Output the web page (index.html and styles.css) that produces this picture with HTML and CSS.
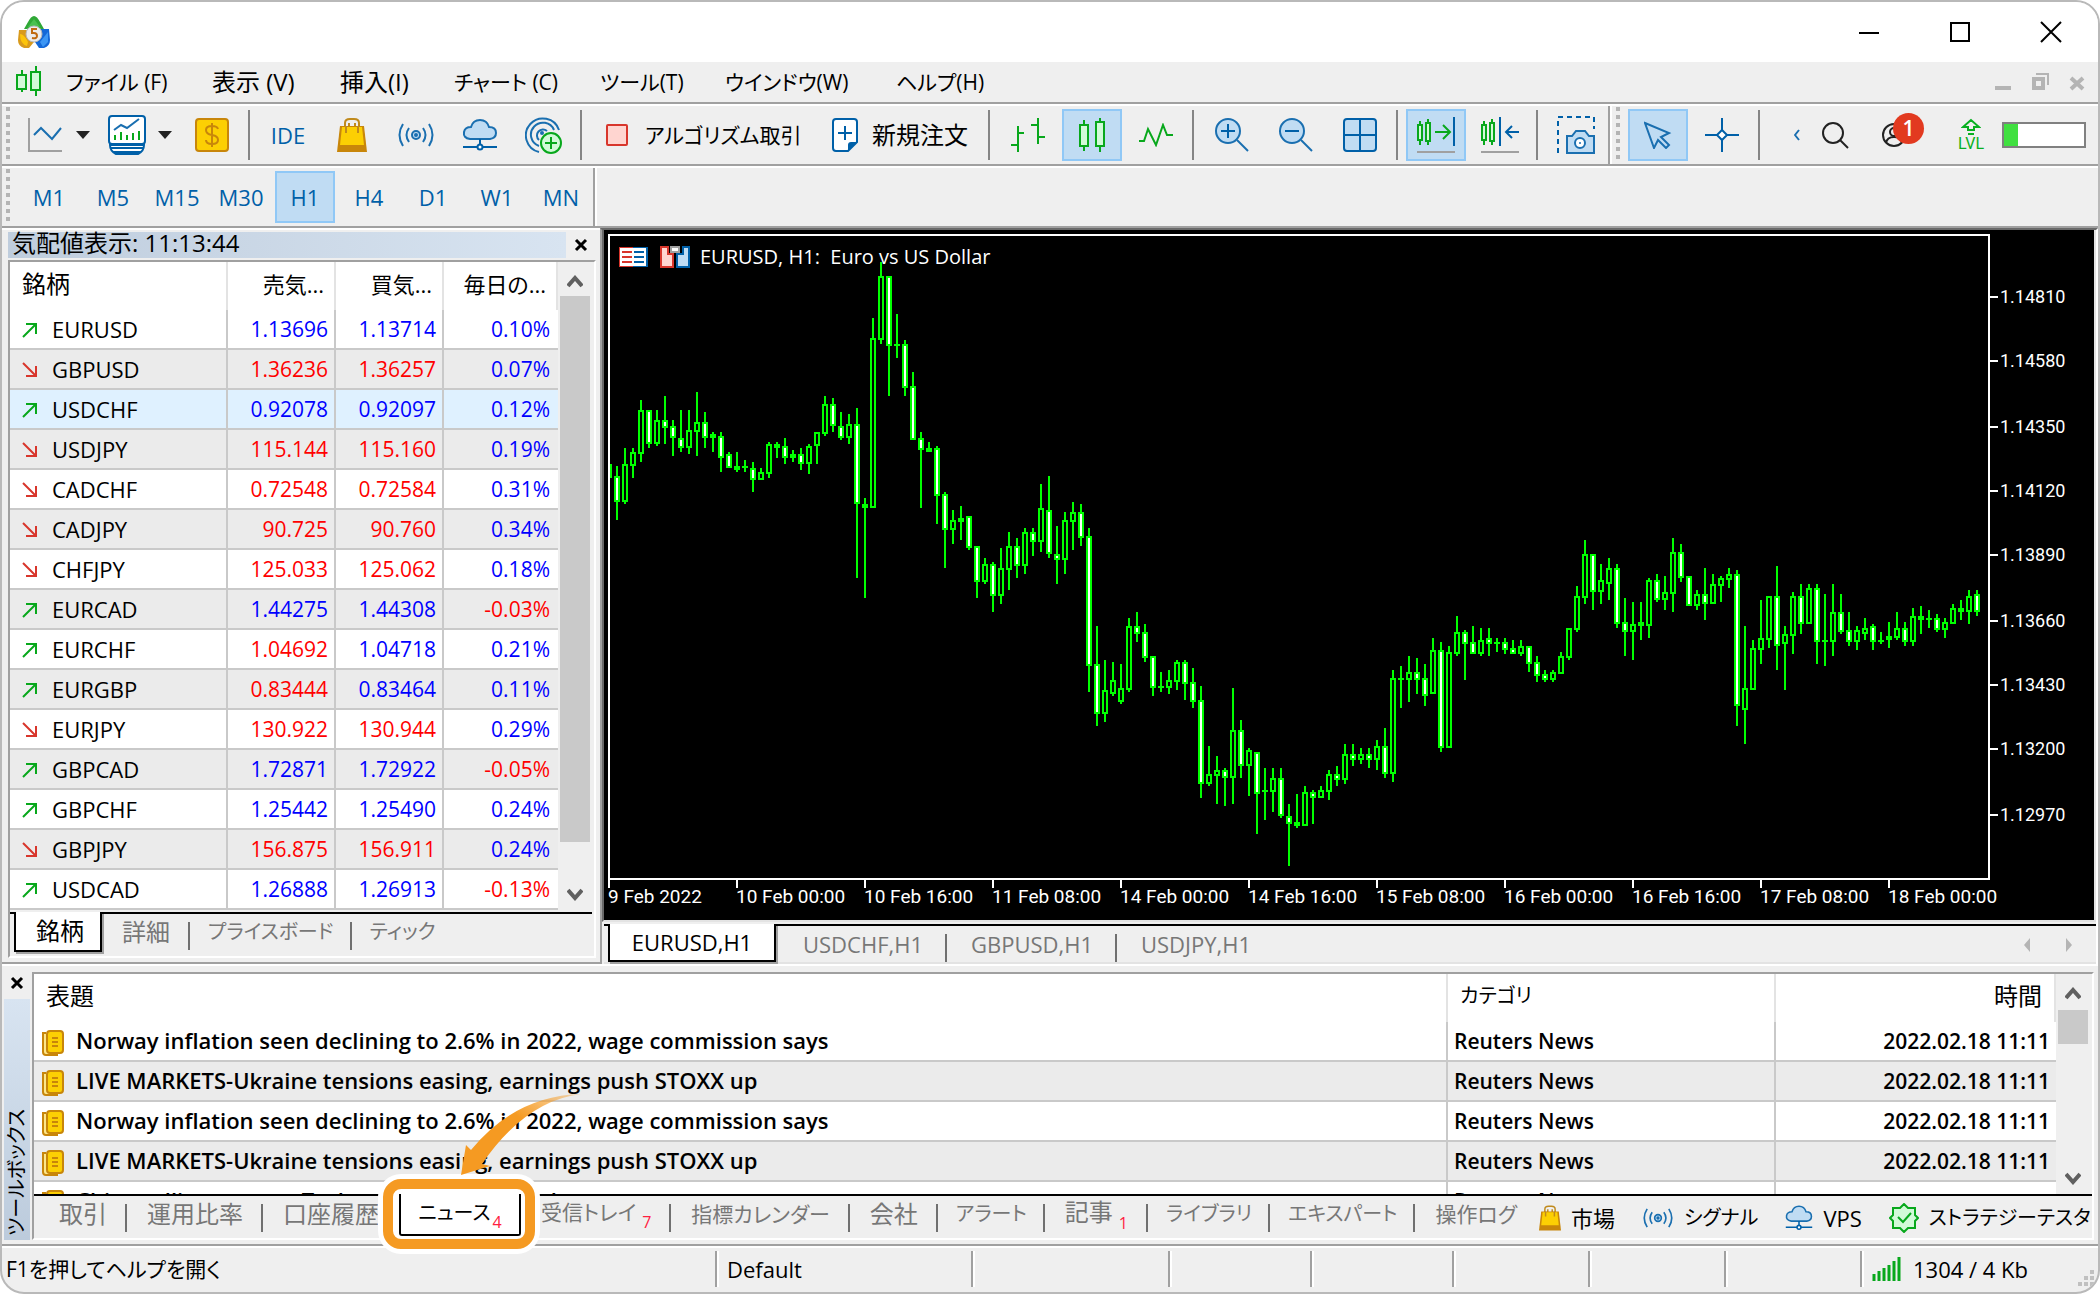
FILE: index.html
```html
<!DOCTYPE html>
<html lang="ja">
<head>
<meta charset="utf-8">
<title>MetaTrader 5</title>
<link rel="stylesheet" href="styles.css">
</head>
<body>
<svg class="defs" width="0" height="0" aria-hidden="true">
  <defs>
    <symbol id="bag" viewBox="0 0 30 34"><path d="M8 9V5q0-4 5-4h4q5 0 5 4v4M12 9V5M18 9V5" fill="none" stroke="#c08a1c" stroke-width="2"/><path d="M3 8h24l3 26H0z" fill="#c8860a"/><path d="M5 9h20l2 18H3z" fill="#fccf03"/><path d="M9 8v7M21 8v7" stroke="#c08a1c" stroke-width="2"/></symbol>
    <symbol id="signal" viewBox="0 0 36 24"><g fill="none" stroke="#1a6fb0" stroke-width="2"><circle cx="18" cy="12" r="4" fill="#c0dcf3"/><circle cx="18" cy="12" r="1"/><path d="M11 5q-5 7 0 14M25 5q5 7 0 14M5 1q-7 11 0 22M31 1q7 11 0 22"/></g></symbol>
    <symbol id="cloud" viewBox="0 0 36 32"><path d="M8 20q-7-1-6-7 1-5 7-5 2-7 9-7t9 7q7 0 7 6 0 5-6 6z" fill="#c0dcf3" stroke="#1a6fb0" stroke-width="2"/><path d="M18 20v7M1 28h34" stroke="#0060a8" stroke-width="2"/><circle cx="18" cy="28" r="2.500" fill="#fff" stroke="#0060a8" stroke-width="2"/></symbol>
    <symbol id="up" viewBox="0 0 16 16"><path d="M1 15L14 2M4 2h10v10" fill="none" stroke="#08a81c" stroke-width="2"/></symbol>
    <symbol id="down" viewBox="0 0 16 16"><path d="M1 1l13 13M4 14h10V4" fill="none" stroke="#d8362c" stroke-width="2"/></symbol>
    <symbol id="news" viewBox="0 0 22 26"><path d="M4 3H1v19q0 3 3 3h11v-3" fill="#fde78a" stroke="#c8860a" stroke-width="2"/><rect x="5" y="1" width="16" height="22" rx="3" fill="#fccf03" stroke="#c8860a" stroke-width="2"/><path d="M10 8h6M10 12h6M10 16h6" stroke="#c8860a" stroke-width="2"/></symbol>
    <symbol id="chev-up" viewBox="0 0 16 14"><path d="M1 11l7-8 7 8" fill="none" stroke="#606060" stroke-width="4"/></symbol>
    <symbol id="chev-down" viewBox="0 0 16 14"><path d="M1 3l7 8 7-8" fill="none" stroke="#606060" stroke-width="4"/></symbol>
    <symbol id="close" viewBox="0 0 14 14"><path d="M2 2l10 10M12 2L2 12" stroke="#000" stroke-width="3"/></symbol>
  </defs>
</svg>

<div class="window">
  <header class="titlebar">
    <svg class="logo" width="32" height="32" viewBox="0 0 32 32"><path d="M16 0q3 0 6 6l4 7H6l4-7q3-6 6-6z" fill="#2fa836"/><path d="M1 14l9 0 6 12-5 6H6q-6-2-6-8z" fill="#d89a1c"/><path d="M2 18q4 0 8 8l-1 4q-7-2-7-12z" fill="#fcc40a"/><path d="M31 13l-8 0-6 13 4 6h5q6-2 6-8z" fill="#1468d8"/><path d="M22 26l8-10v10l-5 5z" fill="#3c96f4"/><path d="M16 3l6 8H10z" fill="#5cd060" opacity=".6"/><circle cx="16" cy="18" r="8" fill="#ececec" stroke="#b8b8b8"/><path d="M19 13h-5v4h2q3 0 3 3t-5 2" fill="none" stroke="#c06a10" stroke-width="2"/></svg>
    <div class="win-buttons">
      <button aria-label="最小化"><svg width="22" height="22" viewBox="0 0 22 22"><path d="M1 12h20" stroke="#000" stroke-width="2"/></svg></button>
      <button aria-label="最大化"><svg width="22" height="22" viewBox="0 0 22 22"><path d="M2 2h18v18H2z" fill="none" stroke="#000" stroke-width="2"/></svg></button>
      <button aria-label="閉じる"><svg width="22" height="22" viewBox="0 0 22 22"><path d="M1 1l20 20M21 1L1 21" stroke="#000" stroke-width="2"/></svg></button>
    </div>
  </header>

  <nav class="menubar">
    <svg width="26" height="32" viewBox="0 0 26 32"><g fill="#d2fad8" stroke="#08a81c" stroke-width="2"><path d="M6 4v22M20 0v30"/><path d="M1 9h9v14H1zM15 6h9v18h-9z"/></g></svg>
    <button class="m1">ファイル (F)</button><button class="m2">表示 (V)</button><button class="m3">挿入(I)</button><button class="m4">チャート (C)</button><button class="m5">ツール(T)</button><button class="m6">ウインドウ(W)</button><button class="m7">ヘルプ(H)</button>
    <div class="mdi-buttons">
      <button aria-label="チャートを最小化"><svg width="18" height="18" viewBox="0 0 18 18"><path d="M1 15h16" stroke="#b4b4b4" stroke-width="4"/></svg></button>
      <button aria-label="元に戻す"><svg width="18" height="18" viewBox="0 0 18 18"><path d="M5 1h12v11" fill="none" stroke="#b4b4b4" stroke-width="2"/><path d="M3 6h9v9H3z" fill="none" stroke="#b4b4b4" stroke-width="4"/></svg></button>
      <button aria-label="チャートを閉じる"><svg width="18" height="18" viewBox="0 0 18 18"><path d="M3 5l12 11M15 5L3 16" stroke="#b4b4b4" stroke-width="4"/></svg></button>
    </div>
  </nav>

  <div class="toolbar">
    <i class="grip"></i>
    <button class="tb split" aria-label="ライン"><svg width="36" height="36" viewBox="0 0 36 36"><path d="M2 1v33h33" fill="none" stroke="#a0a0a0" stroke-width="2"/><path d="M7 18l7-7 11 11L34 11" fill="none" stroke="#1a6fb0" stroke-width="2"/></svg></button>
    <button class="caret" aria-label="ラインの種類"><i></i></button>
    <button class="tb split" aria-label="指標"><svg width="38" height="40" viewBox="0 0 38 40"><rect x="1" y="1" width="36" height="28" rx="3" fill="#fff" stroke="#0060a8" stroke-width="2"/><path d="M6 15l7-5 6 3 12-9" fill="none" stroke="#1a6fb0" stroke-width="2"/><path d="M7 20v5M13 17v8M19 20v5M25 18v7M31 16v9" stroke="#08a81c" stroke-width="2"/><path d="M2 30q0 6 6 9h22q6-3 6-9z" fill="#fff" stroke="#0060a8" stroke-width="2"/><path d="M2 33h34M5 37h28" stroke="#0060a8" stroke-width="2"/></svg></button>
    <button class="caret" aria-label="指標一覧"><i></i></button>
    <button class="tb" aria-label="取引"><svg width="34" height="34" viewBox="0 0 34 34"><rect x="1" y="1" width="32" height="32" rx="3" fill="#fccf03" stroke="#c8860a" stroke-width="2"/><path d="M23 11q-1-3-6-3-6 0-6 4t6 5q6 1 6 5t-6 4q-6 0-6-4M17 5v24" fill="none" stroke="#c8860a" stroke-width="2"/></svg></button>
    <i class="sep"></i>
    <button class="tb ide">IDE</button>
    <button class="tb" aria-label="マーケット"><svg width="30" height="34"><use href="#bag"/></svg></button>
    <button class="tb" aria-label="シグナル"><svg width="36" height="24"><use href="#signal"/></svg></button>
    <button class="tb" aria-label="VPS"><svg width="36" height="32"><use href="#cloud"/></svg></button>
    <button class="tb" aria-label="コミュニティ"><svg width="38" height="38" viewBox="0 0 38 38"><g fill="none" stroke="#1a6fb0" stroke-width="2"><path d="M14 36A17 17 0 1 1 34 14M14 30A12 12 0 1 1 29 14M14 24A6 6 0 1 1 22 15"/></g><circle cx="17" cy="17" r="2" fill="#1a6fb0"/><circle cx="26" cy="27" r="10" fill="#d2fad8" stroke="#08a81c" stroke-width="2"/><path d="M20 27h12M26 21v12" stroke="#08a81c" stroke-width="2"/></svg></button>
    <i class="sep"></i>
    <button class="tb-text algo"><svg width="22" height="22" viewBox="0 0 22 22"><rect x="1" y="1" width="20" height="20" rx="1" fill="#ffd5d0" stroke="#d8362c" stroke-width="2"/></svg>アルゴリズム取引</button>
    <button class="tb-text order"><svg width="26" height="34" viewBox="0 0 26 34"><path d="M4 1h18q3 0 3 3v20l-9 9H4q-3 0-3-3V4q0-3 3-3z" fill="#fff" stroke="#0060a8" stroke-width="2"/><path d="M25 24l-9 9v-6q0-3 3-3z" fill="#0060a8"/><path d="M6 15h14M13 8v14" stroke="#0060a8" stroke-width="2"/></svg>新規注文</button>
    <i class="sep"></i>
    <button class="tb" aria-label="バーチャート"><svg width="34" height="34" viewBox="0 0 34 34"><path d="M7 8v26M0 27h7M7 15h6M27 0v26M20 7h7M27 19h7" stroke="#08a81c" stroke-width="2"/></svg></button>
    <button class="tb on" aria-label="ローソク足"><svg width="28" height="34" viewBox="0 0 28 34"><path d="M6 2v31M22 0v34" stroke="#08a81c" stroke-width="2"/><path d="M2 7h8v21H2zM18 4h8v24h-8z" fill="#d2fad8" stroke="#08a81c" stroke-width="2"/></svg></button>
    <button class="tb" aria-label="ラインチャート"><svg width="34" height="24" viewBox="0 0 34 24"><path d="M0 18h5l4-12 8 16 7-20 4 10h6" fill="none" stroke="#08a81c" stroke-width="2"/></svg></button>
    <i class="sep"></i>
    <button class="tb" aria-label="拡大"><svg width="36" height="36" viewBox="0 0 36 36"><path d="M23 23l11 11" stroke="#1a6fb0" stroke-width="2"/><circle cx="14" cy="14" r="12" fill="#c0dcf3" stroke="#1a6fb0" stroke-width="2"/><path d="M7 14h14M14 7v14" stroke="#0060a8" stroke-width="2"/></svg></button>
    <button class="tb" aria-label="縮小"><svg width="36" height="36" viewBox="0 0 36 36"><path d="M23 23l11 11" stroke="#1a6fb0" stroke-width="2"/><circle cx="14" cy="14" r="12" fill="#c0dcf3" stroke="#1a6fb0" stroke-width="2"/><path d="M7 14h14" stroke="#0060a8" stroke-width="2"/></svg></button>
    <button class="tb" aria-label="整列"><svg width="34" height="34" viewBox="0 0 34 34"><rect x="1" y="1" width="32" height="32" rx="3" fill="#c0dcf3" stroke="#0060a8" stroke-width="2"/><path d="M17 1v32M1 17h32" stroke="#0060a8" stroke-width="2"/></svg></button>
    <i class="sep"></i>
    <button class="tb on" aria-label="自動スクロール"><svg width="38" height="36" viewBox="0 0 38 36"><path d="M3 4v24M11 2v26" stroke="#08a81c" stroke-width="2"/><path d="M1 8h4v15H1zM9 6h4v18H9z" fill="#d2fad8" stroke="#08a81c" stroke-width="2"/><path d="M18 15h14M26 8l7 7-7 7" fill="none" stroke="#08a81c" stroke-width="2"/><path d="M37 0v29" stroke="#0060a8" stroke-width="2"/><path d="M0 35h38" stroke="#a0a0a0" stroke-width="2"/></svg></button>
    <button class="tb" aria-label="チャートシフト"><svg width="38" height="36" viewBox="0 0 38 36"><path d="M3 4v24M11 2v26" stroke="#08a81c" stroke-width="2"/><path d="M1 8h4v15H1zM9 6h4v18H9z" fill="#d2fad8" stroke="#08a81c" stroke-width="2"/><path d="M19 0v29M25 15h13M31 9l-6 6 6 6" fill="none" stroke="#0060a8" stroke-width="2"/><path d="M0 35h38" stroke="#a0a0a0" stroke-width="2"/></svg></button>
    <i class="sep"></i>
    <button class="tb" aria-label="スクリーンショット"><svg width="38" height="38" viewBox="0 0 38 38"><path d="M1 37V1h36v12" fill="none" stroke="#0060a8" stroke-width="2" stroke-dasharray="5 4"/><path d="M10 20h5l4-5h9l4 5h5v17H10z" fill="#c0dcf3" stroke="#1a6fb0" stroke-width="2"/><circle cx="23" cy="27" r="5" fill="#fff" stroke="#1a6fb0" stroke-width="2"/><circle cx="23" cy="27" r="1" fill="#1a6fb0"/></svg></button>
    <i class="band-end"></i><i class="grip"></i>
    <button class="tb on" aria-label="カーソル"><svg width="28" height="28" viewBox="0 0 28 28"><path d="M1 2l24 10-8 4 8 8-3 3-8-8-4 8z" fill="#c0dcf3" stroke="#1a6fb0" stroke-width="2"/></svg></button>
    <button class="tb" aria-label="十字カーソル"><svg width="34" height="34" viewBox="0 0 34 34"><path d="M17 0v34M0 17h34" stroke="#0060a8" stroke-width="2"/><path d="M17 12l5 5-5 5-5-5z" fill="#fff" stroke="#0060a8" stroke-width="2"/></svg></button>
    <i class="sep"></i>
    <div class="tools-right">
      <button class="more" aria-label="その他"><svg width="6" height="12" viewBox="0 0 6 12"><path d="M5 1L1 6l4 5" fill="none" stroke="#1a6fb0" stroke-width="2"/></svg></button>
      <button aria-label="検索"><svg width="28" height="28" viewBox="0 0 28 28"><circle cx="11" cy="12" r="10" fill="none" stroke="#222" stroke-width="2"/><path d="M18 19l8 8" stroke="#222" stroke-width="2"/></svg></button>
      <button class="user" aria-label="通知 1件"><svg width="24" height="26" viewBox="0 0 24 26"><g fill="none" stroke="#222" stroke-width="2"><circle cx="12" cy="13" r="11"/><circle cx="12" cy="10" r="4"/><path d="M4 21q1-6 8-6t8 6"/></g></svg><b>1</b></button>
      <button class="lvl" aria-label="レベル"><svg width="20" height="18" viewBox="0 0 20 18"><path d="M10 2L2 9h5v3h6V9h5zM7 16h6" fill="none" stroke="#08b020" stroke-width="2"/></svg><span>LVL</span></button>
      <i class="gauge"></i>
    </div>
  </div>

  <div class="toolbar periods">
    <i class="grip"></i>
    <button class="tb">M1</button><button class="tb">M5</button><button class="tb">M15</button><button class="tb">M30</button><button class="tb on">H1</button><button class="tb">H4</button><button class="tb">D1</button><button class="tb">W1</button><button class="tb">MN</button>
    <i class="band-end"></i>
  </div>

  <main class="workspace">
    <section class="watch">
      <div class="watch-head"><h2>気配値表示: 11:13:44</h2><button aria-label="閉じる"><svg width="14" height="14"><use href="#close"/></svg></button></div>
      <div class="sunken">
        <div class="scroll-row">
          <table class="quotes">
            <colgroup><col class="c1"><col class="c2"><col class="c2"><col class="c3"></colgroup>
            <thead><tr><th>銘柄</th><th>売気...</th><th>買気...</th><th>毎日の...</th></tr></thead>
            <tbody>
              <tr><td><svg width="16" height="16"><use href="#up"/></svg>EURUSD</td><td class="b">1.13696</td><td class="b">1.13714</td><td class="b">0.10%</td></tr>
              <tr><td><svg width="16" height="16"><use href="#down"/></svg>GBPUSD</td><td class="r">1.36236</td><td class="r">1.36257</td><td class="b">0.07%</td></tr>
              <tr class="sel"><td><svg width="16" height="16"><use href="#up"/></svg>USDCHF</td><td class="b">0.92078</td><td class="b">0.92097</td><td class="b">0.12%</td></tr>
              <tr><td><svg width="16" height="16"><use href="#down"/></svg>USDJPY</td><td class="r">115.144</td><td class="r">115.160</td><td class="b">0.19%</td></tr>
              <tr><td><svg width="16" height="16"><use href="#down"/></svg>CADCHF</td><td class="r">0.72548</td><td class="r">0.72584</td><td class="b">0.31%</td></tr>
              <tr><td><svg width="16" height="16"><use href="#down"/></svg>CADJPY</td><td class="r">90.725</td><td class="r">90.760</td><td class="b">0.34%</td></tr>
              <tr><td><svg width="16" height="16"><use href="#down"/></svg>CHFJPY</td><td class="r">125.033</td><td class="r">125.062</td><td class="b">0.18%</td></tr>
              <tr><td><svg width="16" height="16"><use href="#up"/></svg>EURCAD</td><td class="b">1.44275</td><td class="b">1.44308</td><td class="r">-0.03%</td></tr>
              <tr><td><svg width="16" height="16"><use href="#up"/></svg>EURCHF</td><td class="r">1.04692</td><td class="b">1.04718</td><td class="b">0.21%</td></tr>
              <tr><td><svg width="16" height="16"><use href="#up"/></svg>EURGBP</td><td class="r">0.83444</td><td class="b">0.83464</td><td class="b">0.11%</td></tr>
              <tr><td><svg width="16" height="16"><use href="#down"/></svg>EURJPY</td><td class="r">130.922</td><td class="r">130.944</td><td class="b">0.29%</td></tr>
              <tr><td><svg width="16" height="16"><use href="#up"/></svg>GBPCAD</td><td class="b">1.72871</td><td class="b">1.72922</td><td class="r">-0.05%</td></tr>
              <tr><td><svg width="16" height="16"><use href="#up"/></svg>GBPCHF</td><td class="b">1.25442</td><td class="b">1.25490</td><td class="b">0.24%</td></tr>
              <tr><td><svg width="16" height="16"><use href="#down"/></svg>GBPJPY</td><td class="r">156.875</td><td class="r">156.911</td><td class="b">0.24%</td></tr>
              <tr><td><svg width="16" height="16"><use href="#up"/></svg>USDCAD</td><td class="b">1.26888</td><td class="b">1.26913</td><td class="r">-0.13%</td></tr>
            </tbody>
          </table>
          <div class="scrollbar"><svg width="16" height="14"><use href="#chev-up"/></svg><i class="thumb"></i><svg width="16" height="14"><use href="#chev-down"/></svg></div>
        </div>
        <div class="tabs watch-tabs"><button class="active">銘柄</button><button>詳細</button><button class="kana">プライスボード</button><button class="kana">ティック</button></div>
      </div>
    </section>

    <section class="charts">
      <div class="chart">
        <svg class="plot" width="1490" height="690" viewBox="604 230 1490 690" role="img" aria-label="EURUSD H1">
          <path d="M609 888V235H1989V879H609" fill="none" stroke="#fff" stroke-width="2"/>
          <g id="axis"></g>
          <rect x="619" y="247" width="28" height="20" fill="#d8362c"/><rect x="633" y="247" width="15" height="20" fill="#0060a8"/><rect x="620" y="248" width="26" height="18" fill="#fff"/><path d="M622 252h10M622 257h10M622 262h10" stroke="#d8362c" stroke-width="2"/><path d="M634 252h10M634 257h10M634 262h10" stroke="#0060a8" stroke-width="2"/>
          <path d="M661 247h7v7h5v13h-12z" fill="#ffd5d0" stroke="#d8362c" stroke-width="2"/><path d="M689 247h-6v7h-6v13h12z" fill="#c0dcf3" stroke="#0060a8" stroke-width="2"/><rect x="671" y="247" width="8" height="5" fill="#fff" stroke="#a0a0a0" stroke-width="2"/>
          <text class="chart-title" x="700" y="264">EURUSD, H1:&#160; Euro vs US Dollar</text>
          <g id="candles" shape-rendering="crispEdges"></g>
        </svg>
      </div>
      <div class="tabs chart-tabs"><button class="active">EURUSD,H1</button><button>USDCHF,H1</button><button>GBPUSD,H1</button><button>USDJPY,H1</button>
        <div class="tab-arrows"><button aria-label="前へ"><svg width="6" height="14" viewBox="0 0 6 14"><path d="M6 0v14L0 7z" fill="#b4b4b4"/></svg></button><button aria-label="次へ"><svg width="6" height="14" viewBox="0 0 6 14"><path d="M0 0v14l6-7z" fill="#b4b4b4"/></svg></button></div>
      </div>
    </section>
  </main>

  <section class="toolbox">
    <div class="side"><button aria-label="閉じる"><svg width="14" height="14"><use href="#close"/></svg></button><h2>ツールボックス</h2></div>
    <div class="sunken">
      <div class="scroll-row">
        <div class="news-clip">
        <table class="news">
          <colgroup><col><col class="cat"><col class="time"></colgroup>
          <thead><tr><th>表題</th><th class="kana">カテゴリ</th><th>時間</th></tr></thead>
          <tbody>
            <tr><td><svg width="22" height="26"><use href="#news"/></svg>Norway inflation seen declining to 2.6% in 2022, wage commission says</td><td>Reuters News</td><td>2022.02.18 11:11</td></tr>
            <tr><td><svg width="22" height="26"><use href="#news"/></svg>LIVE MARKETS-Ukraine tensions easing, earnings push STOXX up</td><td>Reuters News</td><td>2022.02.18 11:11</td></tr>
            <tr><td><svg width="22" height="26"><use href="#news"/></svg>Norway inflation seen declining to 2.6% in 2022, wage commission says</td><td>Reuters News</td><td>2022.02.18 11:11</td></tr>
            <tr><td><svg width="22" height="26"><use href="#news"/></svg>LIVE MARKETS-Ukraine tensions easing, earnings push STOXX up</td><td>Reuters News</td><td>2022.02.18 11:11</td></tr>
            <tr class="partial"><td><svg width="22" height="26"><use href="#news"/></svg>China rallies support Tech companies as markets open</td><td>Reuters News</td><td></td></tr>
          </tbody>
        </table>
        </div>
        <div class="scrollbar"><svg width="16" height="14"><use href="#chev-up"/></svg><i class="thumb"></i><svg width="16" height="14"><use href="#chev-down"/></svg></div>
      </div>
      <div class="tabs box-tabs">
        <button>取引</button><button>運用比率</button><button class="last">口座履歴</button>
        <span class="callout"><button class="active kana">ニュース<sub>4</sub></button>
          <svg class="arrow" width="124" height="84" viewBox="0 0 124 84"><defs><linearGradient id="fade" x1="1" y1="0" x2="0" y2="1"><stop offset="0" stop-color="#f59a22" stop-opacity=".3"/><stop offset=".4" stop-color="#f59a22"/></linearGradient></defs><path d="M122 1Q66 8 23 71l8 2L2 82 7 52l5 5Q56 3 122 1z" fill="url(#fade)"/></svg>
        </span>
        <button class="mixed">受信トレイ<sub>7</sub></button><button class="mixed">指標カレンダー</button><button>会社</button><button class="kana">アラート</button><button>記事<sub>1</sub></button><button class="kana">ライブラリ</button><button class="kana">エキスパート</button><button class="mixed last">操作ログ</button>
        <div class="services">
          <a href="#market"><svg width="22" height="26"><use href="#bag"/></svg>市場</a>
          <a href="#signals" class="kana"><svg width="32" height="20"><use href="#signal"/></svg>シグナル</a>
          <a href="#vps"><svg width="28" height="26"><use href="#cloud"/></svg>VPS</a>
          <a href="#tester" class="kana"><svg width="30" height="30" viewBox="0 0 30 30"><path d="M15 1l4 4h7v7l3 3-3 3v7h-7l-4 4-4-4H4v-7l-3-3 3-3V5h7z" fill="#d2fad8" stroke="#08a81c" stroke-width="2"/><path d="M9 14l5 5 8-9" fill="none" stroke="#08a81c" stroke-width="2"/></svg>ストラテジーテスター</a>
        </div>
      </div>
    </div>
  </section>

  <footer class="status">
    <span class="help">F1を押してヘルプを開く</span><span class="profile">Default</span><span class="s1"></span><span class="s2"></span><span class="s3"></span><span class="s4"></span><span class="s4"></span><span class="s4"></span>
    <span class="net"><svg width="30" height="24" viewBox="0 0 30 24"><path d="M2 17v7M7 14v10M12 11v13M17 8v16M22 4v20M27 0v24" stroke="#08a81c" stroke-width="3"/></svg>1304 / 4 Kb</span>
    <svg class="resize" width="18" height="18" viewBox="0 0 18 18"><path d="M12 0h4v4h-4zM6 6h4v4H6zM12 6h4v4h-4zM0 12h4v4H0zM6 12h4v4H6zM12 12h4v4h-4z" fill="#c0c0c0"/></svg>
  </footer>
</div>
<script src="chart.js"></script>
</body>
</html>
```
FILE: styles.css
```css
* { box-sizing: border-box; }
body {
  margin: 0;
  background: #fff;
  color: #000;
  font: 22px/28px "Open Sans", "Noto Sans CJK JP", sans-serif;
  font-feature-settings: "palt";
}
button { margin: 0; padding: 0; border: 0; background: none; font: inherit; color: inherit; white-space: nowrap; }
svg { display: block; flex: none; }
h2 { margin: 0; font: inherit; }
.defs { position: absolute; }

.window {
  display: flex;
  flex-direction: column;
  height: 100vh;
  border: 2px solid #b9b9b9;
  border-radius: 24px;
  overflow: hidden;
  background: #efefef;
}

/* title and menu */
.titlebar { display: flex; flex: none; align-items: center; justify-content: space-between; height: 60px; padding: 0 36px 0 16px; background: #fff; }
.win-buttons { display: flex; gap: 69px; }
.menubar { display: flex; flex: none; align-items: center; height: 42px; padding-left: 14px; border-bottom: 2px solid #a0a0a0; font-size: 21px; }
.menubar > button { text-align: left; }
.menubar > svg { margin-right: 24px; }
.m1 { width: 146px; }
.menubar > .m2 { width: 128px; font-size: 24px; }
.menubar > .m3 { width: 114px; font-size: 24px; }
.m4 { width: 146px; }
.m5 { width: 125px; }
.m6 { width: 171px; }
.mdi-buttons { display: flex; gap: 19px; margin-left: auto; padding-right: 12px; }

/* toolbars */
.toolbar { display: flex; flex: none; align-items: center; height: 62px; border-top: 2px solid #fff; border-bottom: 2px solid #a0a0a0; color: #0060a8; }
.grip { flex: none; width: 4px; height: 56px; margin: 0 6px 0 4px; background: repeating-linear-gradient(#b4b4b4 0 4px, transparent 4px 8px); }
.tb { display: flex; flex: none; align-items: center; justify-content: center; width: 60px; height: 52px; margin: 0 2px; }
.on { border: 2px solid #90c8f6; background: #c0dcf3; }
.split { width: 54px; }
.sep { flex: none; width: 2px; height: 50px; margin: 0 6px 0 4px; background: #858585; }
.band-end { flex: none; align-self: stretch; width: 4px; border-left: 2px solid #a0a0a0; border-right: 2px solid #fff; }
.toolbar > .caret { width: 24px; padding-left: 2px; }
.caret i { display: block; width: 14px; border: 7px solid transparent; border-top: 8px solid #222; border-bottom: 0; }
.tb-text { display: flex; flex: none; align-items: center; color: #000; }
.algo { width: 226px; padding-left: 18px; gap: 17px; font-size: 21px; }
.order { width: 170px; padding-left: 18px; gap: 14px; font-size: 24px; }
.tools-right { display: flex; flex: 1; align-items: center; justify-content: flex-end; padding-right: 12px; }
.more { margin-right: 22px; }
.user { position: relative; width: 42px; margin: 0 34px 0 32px; }
.user b { position: absolute; left: 11px; top: -9px; width: 31px; height: 31px; border-radius: 50%; background: #e23a20; color: #fff; font-weight: 600; font-size: 21px; line-height: 31px; }
.lvl { display: flex; flex-direction: column; align-items: center; color: #08b020; font: 16px/16px Roboto, sans-serif; }
.gauge { width: 84px; height: 26px; margin-left: 18px; border: 2px solid #808080; background: linear-gradient(90deg, #40e040 14px, #fff 14px); }
.periods .grip { margin-right: 7px; }

/* workspace */
.workspace { display: flex; flex: none; }
.watch { flex: none; width: 600px; padding: 2px 6px 4px; border-top: 2px solid #fff; border-bottom: 2px solid #a0a0a0; }
.watch-head { display: flex; align-items: center; justify-content: space-between; padding-right: 8px; margin-bottom: 2px; }
.watch-head h2 { width: 558px; height: 26px; padding: 0 4px; font-size: 24px; line-height: 22px; background: linear-gradient(90deg, #bfcddd, #d8e4f1); }
.sunken { display: flex; flex-direction: column; border: 2px solid #fff; border-top-color: #a0a0a0; border-left-color: #a0a0a0; }
.scroll-row { display: flex; flex: 1; min-height: 0; background: #fff; border-bottom: 2px solid #000; }
.scrollbar { display: flex; flex: none; flex-direction: column; align-items: center; width: 30px; margin-left: auto; padding: 13px 0 9px; background: #efefef; }
.scrollbar .thumb { width: 100%; background: #c9c9c9; }
.watch .scroll-row { margin-right: 2px; padding: 0 2px 2px 0; background: #efefef; }
.watch .thumb { height: 546px; margin: 7px 0 auto; }

table { border-collapse: separate; border-spacing: 0; table-layout: fixed; background: #fff; }
th { height: 48px; padding: 0 0 4px; font-size: 24px; font-weight: 400; border-right: 2px solid #e3e3e3; }
td { height: 40px; padding: 0; border-right: 2px solid #c9c9c9; border-bottom: 2px solid #c9c9c9; white-space: nowrap; }
td:last-child { border-right: 0; }
tbody tr:nth-child(even) { background: #ebebeb; }
td svg { display: inline-block; vertical-align: middle; }
.quotes { width: 548px; }
.c1 { width: 218px; }
.c2 { width: 108px; }
.quotes td, .quotes th { text-align: right; }
.quotes th { padding-right: 10px; font-size: 22px; }
.quotes td { padding-right: 6px; font-size: 21px; }
.quotes td:last-child { padding-right: 8px; }
.quotes td:first-child, .quotes th:first-child { padding-left: 12px; text-align: left; }
.quotes td:first-child { font-size: 22px; }
.quotes th:first-child { font-size: 24px; }
.quotes td svg { margin-right: 14px; margin-top: -4px; }
.quotes tr.sel { background: #dff1ff; }
.b { color: #0000ff; }
.r { color: #ff0000; }

/* tab strips */
.tabs { display: flex; flex: none; color: #777; font-size: 24px; }
.tabs > button { position: relative; height: 36px; padding: 0 20px; }
.tabs > button:not(.active):not(:last-of-type)::after { content: ""; position: absolute; right: 0; top: 8px; width: 2px; height: 28px; background: #707070; }
.tabs > button.last::after { display: none; }
.tabs .active { border: 2px solid #000; border-top: 0; background: #fff; color: #000; box-shadow: 2px 2px 0 #a0a0a0; }
.tabs sub { color: #ff2040; font-size: 16px; line-height: 1; vertical-align: -8px; margin-left: 6px; }
.mixed { font-size: 21px; }
.kana, .tabs .kana, .news .kana { font-size: 20px; }
.tabs > .kana { padding: 0 18px; }
.watch-tabs { height: 42px; }
.watch-tabs .active { width: 88px; height: 40px; margin: -2px 0 0 4px; }

.charts { flex: 1; min-width: 0; border-left: 2px solid #a0a0a0; border-top: 2px solid #696969; border-right: 2px solid #fff; display: flex; flex-direction: column; margin-left: -2px; }
.chart { background: #000; border-left: 2px solid #696969; border-right: 2px solid #e3e3e3; border-bottom: 2px solid #e3e3e3; }
.plot text { fill: #fff; font: 18px Roboto, sans-serif; }
.plot .date { font-size: 19px; }
.plot .chart-title { font: 20px "Open Sans", sans-serif; }
.chart-tabs { flex: 1; align-items: flex-start; margin: 2px 0 0 2px; border-top: 2px solid #000; border-bottom: 2px solid #e3e3e3; font-size: 22px; }
.chart-tabs > button { padding: 0 24px; }
.chart-tabs .active { width: 168px; height: 38px; margin: -2px 3px 0 4px; padding: 0; }
.tab-arrows { display: flex; gap: 36px; margin-left: auto; padding: 12px 24px 0 0; }
.tab-arrows button { line-height: 14px; }

/* toolbox */
.toolbox { display: flex; flex: 1; min-height: 0; padding: 6px 4px 4px 2px; border-top: 2px solid #fff; }
.side { display: flex; flex: none; flex-direction: column; align-items: center; width: 26px; margin-right: 2px; padding-top: 4px; }
.side h2 { flex: 1; width: 26px; margin-top: 9px; padding-top: 4px; background: linear-gradient(#bccbdc, #d8e4f1); font-size: 20px; line-height: 26px; writing-mode: vertical-rl; text-orientation: sideways; transform: rotate(180deg); }
.toolbox .sunken { flex: 1; min-width: 0; }
.toolbox .scroll-row { padding-right: 4px; background: #efefef; }
.toolbox .thumb { height: 34px; margin: 9px 0 auto; }
.toolbox .scrollbar { margin-left: 2px; }
.news-clip { flex: 1; overflow: hidden; background: #fff; }
.news { width: 100%; }
.cat { width: 328px; }
.time { width: 280px; }
.news th { text-align: left; padding-left: 12px; }
.news td { padding: 0 6px; font-size: 21px; font-weight: 600; }
.news td:first-child { font-size: 22px; }
.news td svg { margin: -2px 12px 0 2px; }
.news th:last-child { text-align: right; padding-right: 12px; }
.news td:last-child { text-align: right; }
.box-tabs { height: 42px; padding-left: 5px; }
.callout { position: relative; z-index: 1; flex: none; margin: -7px -14px 0 -16px; width: 152px; height: 0; }
.callout::before { content: ""; position: absolute; left: 0; top: -10px; box-sizing: border-box; width: 152px; height: 70px; border: 10px solid #f59a22; border-radius: 18px; background: #fff; box-shadow: 0 0 0 5px #fff; }
.callout .active { position: absolute; left: 16px; top: 5px; width: 122px; height: 42px; border-radius: 0 0 3px 3px; box-shadow: none; }
.callout .arrow { position: absolute; left: 76px; top: -96px; }
.callout sub { margin-left: 2px; }
.services { display: flex; align-items: center; gap: 27px; height: 44px; margin-left: 2px; overflow: hidden; font-size: 22px; }
.services a { display: flex; align-items: center; gap: 10px; color: #000; text-decoration: none; white-space: nowrap; }

/* status bar */
.status { display: flex; flex: none; align-items: center; height: 48px; padding-left: 4px; border-top: 2px solid #a0a0a0; box-shadow: inset 0 2px #fff; }
.status span { display: flex; align-items: center; height: 36px; padding-left: 10px; border-left: 2px solid #a0a0a0; box-shadow: inset 2px 0 #fff; }
.status .help { flex: 1; padding-left: 0; border: 0; box-shadow: none; font-size: 21px; }
.profile { width: 256px; }
.s1 { width: 197px; }
.s2 { width: 142px; }
.s3 { width: 142px; }
.s4 { width: 136px; }
.status .net { width: 218px; gap: 11px; }
.resize { align-self: flex-end; margin: 0 2px 4px 0; }
```
FILE: chart.js
```js
// One candle per entry: high, body top, body bottom, low, and whether the bar closed down.
const bars = `236 246 272 290 d|218 234 272 274 u|218 222 236 248 u|170 180 224 232 u|180 180 214 218 d|180 190 214 216 u|166 190 198 214 d|190 196 208 226 d|180 208 218 222 d|180 200 218 224 u|162 192 202 226 u|182 192 208 218 d|202 204 208 222 u|202 206 228 242 d|222 224 238 238 d|222 236 240 242 u|230 236 238 242 u|232 238 250 262 d|238 242 250 250 u|212 214 244 248 u|212 214 218 228 u|208 216 228 234 d|220 224 228 232 u|218 224 234 240 d|214 216 234 244 u|202 202 216 234 u|166 174 204 206 u|168 174 196 202 d|182 196 208 210 d|184 194 208 214 u|178 194 274 348 d|268 274 278 368 u|88 108 278 278 u|32 46 110 114 u|46 46 116 166 d|84 114 116 128 u|110 114 158 166 d|142 156 210 210 d|202 208 220 278 d|212 218 222 222 u|216 218 266 294 d|262 264 300 338 d|280 290 300 314 u|276 288 292 310 u|286 286 318 320 d|316 316 352 368 d|328 334 352 354 u|332 334 366 382 d|318 338 366 374 u|302 316 340 360 u|308 316 336 348 d|298 302 336 344 u|298 302 312 326 d|254 278 312 322 u|246 280 324 328 d|296 324 330 354 d|282 290 330 344 u|272 282 292 320 u|274 282 308 316 d|298 306 436 462 d|396 434 484 496 d|430 460 484 492 u|432 450 464 466 u|434 458 472 474 u|388 396 460 462 u|382 396 404 412 d|394 402 428 432 d|426 426 458 466 d|442 456 458 462 u|440 450 458 464 u|430 432 452 460 u|430 432 454 470 d|438 452 472 478 d|456 470 554 568 d|516 544 554 556 u|526 540 546 574 u|538 540 548 576 d|458 500 548 574 u|490 500 536 548 d|518 520 536 566 u|522 522 564 604 d|538 560 562 590 u|538 548 562 582 u|538 548 586 588 d|574 586 594 636 d|564 592 596 598 u|556 562 596 596 u|560 562 568 594 d|556 560 568 568 u|540 544 562 570 u|536 544 550 556 d|514 524 550 554 u|514 524 530 536 d|518 524 530 534 u|518 524 530 538 d|510 516 530 540 u|498 516 544 548 d|440 448 544 552 u|436 448 450 478 u|426 442 450 472 u|428 442 450 464 d|434 448 466 476 d|408 420 464 464 u|412 420 518 522 d|416 422 518 518 u|386 402 424 426 u|400 402 414 450 d|396 412 424 424 d|398 410 424 426 u|398 408 414 426 d|408 412 414 422 u|408 412 420 424 d|410 418 424 424 d|410 416 424 426 u|416 416 434 442 d|426 432 446 452 d|440 444 450 452 d|440 442 450 452 u|422 426 444 444 u|398 398 428 430 u|356 366 400 402 u|310 324 368 374 u|324 324 362 380 d|334 350 362 374 u|328 338 354 370 u|334 338 394 398 d|368 392 402 426 d|372 394 402 430 u|372 392 396 410 u|348 350 396 408 u|344 350 370 372 d|346 362 370 380 u|308 322 364 382 u|314 322 348 352 d|346 346 376 376 d|360 364 376 380 u|338 364 374 390 d|344 354 374 374 u|346 348 356 372 u|338 344 350 358 u|340 344 476 496 d|396 458 480 514 u|410 418 460 460 u|370 408 420 434 u|366 366 410 418 u|336 366 416 440 d|396 404 414 460 u|362 366 406 424 u|354 366 394 404 d|354 358 394 394 u|354 358 412 434 d|364 410 412 436 u|354 382 412 426 u|364 382 402 404 d|382 400 412 416 d|396 400 412 420 u|388 398 404 410 u|394 396 412 420 d|402 410 412 414 u|392 406 410 418 u|382 398 408 410 u|392 398 412 416 d|378 386 412 416 u|376 386 390 404 u|380 388 390 398 u|384 388 400 402 d|388 392 400 408 u|374 378 394 394 u|370 378 382 390 u|360 366 382 394 u|360 364 382 386 d`;
const rect = (x, y, w, h, fill) => `<rect x="${x}" y="${y}" width="${w}" height="${h}" fill="${fill}"/>`;
const green = '#00ff00';
let out = rect(610, 464, 2, 14, green);
bars.split('|').forEach((bar, i) => {
  const [high, top, bottom, low, dir] = bar.split(' ');
  const x = 616 + 8 * i, y = 230 + +top, h = bottom - top;
  out += rect(x, 230 + +high, 2, low - high, green) + rect(x - 2, y, 6, h, green);
  if (h > 4) out += rect(x, y + 2, 2, h - 4, dir === 'd' ? '#fff' : '#000');
});
document.getElementById('candles').innerHTML = out;

const prices = [['1.14810', 297], ['1.14580', 361], ['1.14350', 427], ['1.14120', 491], ['1.13890', 555], ['1.13660', 621], ['1.13430', 685], ['1.13200', 749], ['1.12970', 815]];
const dates = ['9 Feb 2022', '10 Feb 00:00', '10 Feb 16:00', '11 Feb 08:00', '14 Feb 00:00', '14 Feb 16:00', '15 Feb 08:00', '16 Feb 00:00', '16 Feb 16:00', '17 Feb 08:00', '18 Feb 00:00'];
document.getElementById('axis').innerHTML =
  prices.map(([p, y]) => rect(1990, y - 1, 8, 2, '#fff') + `<text x="2000" y="${y + 6}">${p}</text>`).join('') +
  dates.map((d, i) => rect(608 + 128 * i, 880, 2, 8, '#fff') + `<text class="date" x="${608 + 128 * i}" y="903">${d}</text>`).join('');
```
